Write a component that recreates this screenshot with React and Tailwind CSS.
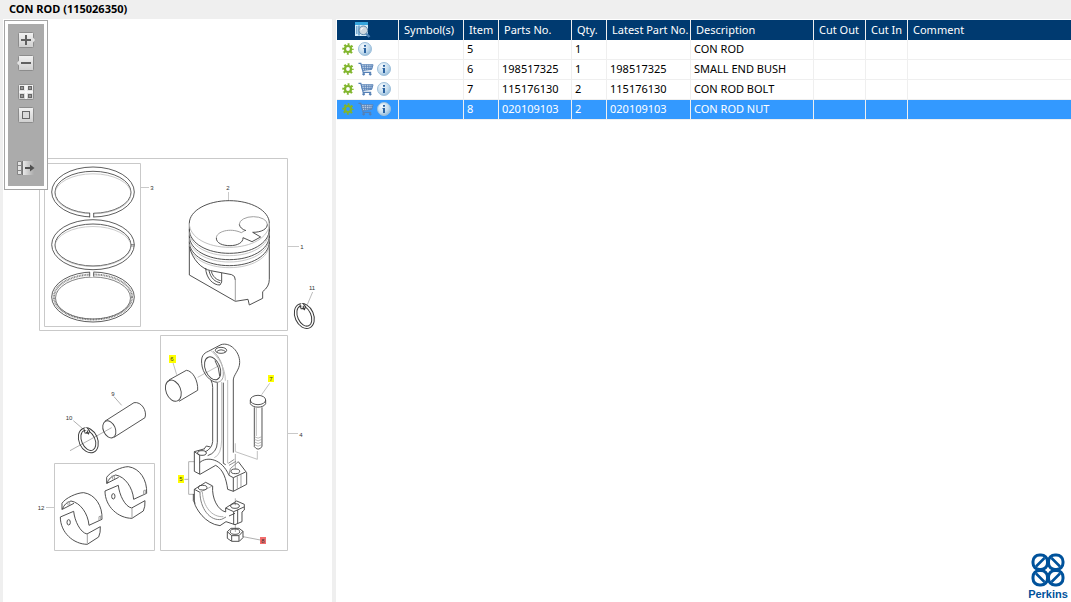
import { useState } from 'react'

const parts = [
  { item: '5', partNo: '', qty: '1', description: 'CON ROD' },
  { item: '6', partNo: '198517325', qty: '1', description: 'SMALL END BUSH' },
  { item: '7', partNo: '115176130', qty: '2', description: 'CON ROD BOLT' },
  { item: '8', partNo: '020109103', qty: '2', description: 'CON ROD NUT' },
]

const headers = ['Symbol(s)', 'Item', 'Parts No.', 'Qty.', 'Latest Part No.', 'Description', 'Cut Out', 'Cut In', 'Comment']

function ToolButton({ label, className, children }) {
  return (
    <button type="button" aria-label={label} className={`block h-4 w-[18px] ${className}`}>
      <svg viewBox="0 0 18 16" className="block h-4 w-[18px]">
        <defs>
          <linearGradient id="face" x1="0" y1="0" x2="0" y2="1">
            <stop offset="0" stopColor="#f2f2f2" />
            <stop offset="1" stopColor="#cfcfcf" />
          </linearGradient>
          <linearGradient id="fade" x1="0" y1="0" x2="1" y2="0">
            <stop offset="0" stopColor="#eeeeee" />
            <stop offset="1" stopColor="#ababab" />
          </linearGradient>
        </defs>
        {children}
      </svg>
    </button>
  )
}

function Face() {
  return <rect x="1.5" y="0.5" width="15" height="15" rx="1" fill="url(#face)" stroke="#8c8c8c" />
}

function Toolbar() {
  return (
    <div className="absolute left-px top-px border border-[#a5a5a5] bg-white p-[3px]">
      <div className="flex w-9 flex-col items-center bg-[#ababab] pb-[10px] pt-2">
        <ToolButton label="Zoom in" className="">
          <Face />
          <path d="M16 5.5l2 2.5-2 2.5z" fill="#e6e6e6" />
          <path d="M9 3v10M4 8h10" stroke="#606060" strokeWidth="2" />
        </ToolButton>
        <ToolButton label="Zoom out" className="mt-[7px]">
          <Face />
          <path d="M2 5.5L0 8l2 2.5z" fill="#e6e6e6" />
          <path d="M4 8h10" stroke="#606060" strokeWidth="2" />
        </ToolButton>
        <ToolButton label="Fit to window" className="mt-[13px]">
          <Face />
          <path d="M9 1v14M2 8h14" stroke="#f6f6f6" strokeWidth="2" />
          <g fill="#969696" stroke="#666">
            <rect x="3.5" y="2.5" width="3" height="3" />
            <rect x="11.5" y="2.5" width="3" height="3" />
            <rect x="3.5" y="10.5" width="3" height="3" />
            <rect x="11.5" y="10.5" width="3" height="3" />
          </g>
        </ToolButton>
        <ToolButton label="Actual size" className="mt-[7px]">
          <Face />
          <rect x="5.5" y="4.5" width="7" height="7" fill="#d9d9d9" stroke="#666" />
        </ToolButton>
        <ToolButton label="Hide list" className="mt-[37px]">
          <rect x="5" y="1" width="12" height="14" fill="url(#fade)" />
          <path d="M0.5 1.5h4v13h-4zM0.5 5.5h4M0.5 10.5h4" fill="#e3e3e3" stroke="#858585" />
          <path d="M5.5 1v14" stroke="#777" />
          <path d="M8 8h6" stroke="#505050" strokeWidth="2" />
          <path d="M13 4.5L17.5 8 13 11.5z" fill="#505050" />
        </ToolButton>
      </div>
    </div>
  )
}

function Shell({ transform }) {
  return (
    <g transform={transform} stroke="#444">
      <path d="M230 311V292C240 276 275 260 295 260C330 265 352 300 350 340L311 358C308 322 285 290 257 285Q238 290 231 310L266 292" />
      <path d="M225 333L265 316C268 345 285 380 305 384L345 362Q346 380 340 393L306 415C265 415 225 380 225 333z" />
      <path d="M306 384V413M246 287l3 12M252 285l2 12M341 344v-12l5-2v10" stroke="#999" />
      <ellipse cx="250" cy="349" rx="5" ry="8" />
    </g>
  )
}

function Circlip({ cx, cy }) {
  return (
    <g transform={`translate(${cx} ${cy}) rotate(-24)`} stroke="#3a3a3a">
      <ellipse rx="28" ry="39" />
      <ellipse rx="20" ry="32" />
      <path d="M6-38L10-22" stroke="#fff" strokeWidth="6" />
      <path d="M2-38l-2 14 8 4 1-9M12-35l3 11-7 7-4-8" />
    </g>
  )
}

function Diagram() {
  return (
    <svg viewBox="3 19 329 583" className="block h-[583px] w-[329px]" fill="none" aria-label="Con rod exploded view">
      <g stroke="#c9c9c9">
        <path d="M39.5 158.5H287.5V330.5H39.5z" />
        <path d="M44.5 163.5H140.5V326.5H44.5z" />
        <path d="M160.5 335.5H287.5V550.5H160.5z" />
        <path d="M54.5 463.5H154.5V550.5H54.5z" />
        <path d="M141 187.5h8M288 246.5h11M288 433.5h10M228.5 192v9M46 507.5h8" />
      </g>

      {/* piston rings */}
      <g stroke="#4c4c4c" strokeWidth="0.9">
        <ellipse cx="93" cy="192" rx="41.3" ry="25" />
        <ellipse cx="93" cy="192.3" rx="38" ry="21" />
        <ellipse cx="93" cy="193.8" rx="38" ry="20" stroke="#aaa" strokeWidth="0.6" />
        <path d="M90 212h3.5v6H90z" fill="#fff" stroke="none" />
        <path d="M89.7 213v4.3M93.7 213v4.3" />
        <ellipse cx="93" cy="244.7" rx="41.3" ry="25" />
        <ellipse cx="93" cy="245" rx="38" ry="21" />
        <ellipse cx="93" cy="246.5" rx="38" ry="20" stroke="#aaa" strokeWidth="0.6" />
        <path d="M131 244.5h3.5M131 246h3.5" strokeWidth="0.6" />
        <ellipse cx="93" cy="297" rx="41.3" ry="25" />
        <ellipse cx="93" cy="297" rx="39" ry="22.5" stroke="#888" strokeWidth="2" strokeDasharray="1 0.6" />
        <ellipse cx="93" cy="298" rx="37.5" ry="21" strokeWidth="0.7" />
        <path d="M90 271h3.5v6H90z" fill="#fff" stroke="none" />
        <path d="M89.7 272.2v4.3M93.7 272.2v4.3" />
      </g>

      {/* piston */}
      <g transform="translate(170 170) scale(0.3333)" stroke="#444" strokeWidth="2.8">
        <path d="M58 160C58 122 112 92 178 92S298 122 298 160V328Q298 350 278 365V385L238 405L234 388L196 394L58 315V160" />
        <path d="M58 160C58 202 112 232 178 232S298 202 298 160" stroke="#bbb" />
        <path d="M58 178C58 220 112 250 178 250S298 220 298 178M58 197C58 239 112 269 178 269S298 239 298 197M58 215C58 257 112 287 178 287S298 257 298 215" />
        <path d="M58 185C58 227 112 257 178 257S298 227 298 185M58 204C58 246 112 276 178 276S298 246 298 204M58 222C58 264 112 293 178 293S298 264 298 222" stroke="#aaa" strokeWidth="2" />
        <path d="M58 230C68 270 95 297 122 302L185 314Q196 317 196 330" />
        <path d="M196 328V394" stroke="#999" />
        <path d="M107 294C108 325 130 346 150 345L155 336V309M117 302C122 325 136 336 150 338M124 304C128 320 140 330 152 332" />
        <path d="M208 163A42 23 0 0 1 292 163M139 204C139 185 180 172 214 188L226 181" stroke="#999" />
        <path d="M139 204C139 220 158 227 180 227S220 218 219 203L246 215L272 201L248 187C275 187 292 177 292 163M208 163Q210 176 228 182" />
      </g>
      <g transform="translate(170 170) scale(0.3333)" strokeWidth="3">
        <path d="M428 366L412 404" stroke="#bbb" />
        <Circlip cx={403} cy={438} />
      </g>

      {/* bush, rod shank and bolt */}
      <g transform="translate(155 330) scale(0.3333)" stroke="#484848" strokeWidth="2.8">
        <path d="M54 98L65 134M128 142L192 107M344 160L320 194M241 340V365L307 388V363" stroke="#bbb" />
        <ellipse cx="55" cy="182" rx="22" ry="33" transform="rotate(-22 55 182)" />
        <path d="M42 150L94 121C113 122 130 152 128 181L72 214" />
        <path d="M168 151Q173 160 173 172V335Q171 356 150 366M235 368V150C235 135 254 120 254 98C255 65 225 35 198 44L160 64C145 70 138 80 140 100C142 130 165 157 188 157" />
        <path d="M188 157Q204 154 205 135C206 105 192 78 174 64" stroke="#999" />
        <ellipse cx="173" cy="115" rx="22" ry="36" transform="rotate(-22 173 115)" />
        <path d="M180 92Q193 112 194 138" />
        <ellipse cx="198" cy="61" rx="17" ry="9" />
        <path d="M185 65Q198 54 212 65M187 158V337Q186 368 158 377M205 158V400" />
        <path d="M218 150V400M200 156V330Q199 375 178 383M168 62C190 80 212 115 211 152" stroke="#bbb" />
        <ellipse cx="309" cy="210" rx="23" ry="14" />
        <path d="M286 210V221C292 235 326 235 332 221V210M298 232V350Q309 365 321 350V232" />
        <path d="M298 320Q309 329 321 320M298 328Q309 337 321 328M298 336Q309 345 321 336M298 344Q309 353 321 344M304 234V318" stroke="#999" strokeWidth="2" />
      </g>

      {/* big end, cap and nut */}
      <g transform="translate(155 430) scale(0.3333)" stroke="#444" strokeWidth="2.8">
        <path d="M118 95H101V193H118M101 148H88M241 72V118M241 205V226M241 282V306M264 320L316 330" stroke="#aaa" />
        <path d="M150 56L118 65V124L135 133L182 106C205 118 214 148 218 178L235 184L275 163V128L250 95M118 65L134 76V132M134 98C155 78 200 85 222 136L235 143V184M235 143L272 126" />
        <path d="M258 133V172M247 139V178" stroke="#999" />
        <ellipse cx="141" cy="69" rx="13" ry="7" />
        <path d="M148 56L154 48L166 51M205 100L212 104" />
        <path d="M222 136L226 116L250 95M220 100L238 88M222 106L243 94" stroke="#888" />
        <ellipse cx="241" cy="124" rx="13" ry="7" />
        <path d="M118 178L152 157L173 168C170 205 188 240 212 246V234L245 213L268 223V240L261 246V275L240 284L213 275L195 287C150 282 122 235 118 218V178M118 178L135 187M212 234L236 245V283M236 245L267 231M248 240V280M115 192V212L121 220M222 258L240 250" />
        <path d="M135 187C135 235 165 275 200 268L213 261" stroke="#777" />
        <path d="M135 187L172 168M142 186C145 230 170 262 205 260" stroke="#aaa" />
        <ellipse cx="143" cy="173" rx="13" ry="7" />
        <ellipse cx="240" cy="228" rx="13" ry="7" />
        <path d="M217 305L228 295H252L264 304V323L253 334H230L217 325zM217 305L230 317H252L264 304M230 317V333M252 317V333" />
        <ellipse cx="240" cy="305" rx="14" ry="8" />
      </g>

      {/* gudgeon pin, circlip and bearing shells */}
      <g transform="translate(30 380) scale(0.3333)" stroke="#484848" strokeWidth="2.8">
        <path d="M252 50L275 76M130 122L158 146M120 212L245 143" stroke="#aaa" />
        <ellipse cx="238" cy="148" rx="18" ry="27" transform="rotate(-24 238 148)" />
        <path d="M224 124L312 68C334 64 352 92 345 113L252 172" />
        <Circlip cx={175} cy={181} />
        <Shell />
        <Shell transform="translate(-134 78)" />
      </g>

      <g fill="#ffff00">
        <path d="M169 355h7v8h-7zM268 375h6v7h-6zM178 475h6v8h-6z" />
        <path d="M260 537h6v7h-6z" fill="#f26d6d" />
      </g>
      <g fill="#333" fontFamily="Liberation Sans, Arial, sans-serif" fontSize="6" textAnchor="middle">
        <text x="302" y="249">1</text>
        <text x="228" y="190">2</text>
        <text x="152" y="190">3</text>
        <text x="301" y="437">4</text>
        <text x="181" y="481">5</text>
        <text x="172" y="361">6</text>
        <text x="271" y="381">7</text>
        <text x="263" y="543">8</text>
        <text x="113" y="396">9</text>
        <text x="69" y="420">10</text>
        <text x="312" y="290">11</text>
        <text x="41" y="510">12</text>
      </g>
    </svg>
  )
}

function GearIcon() {
  return (
    <svg viewBox="0 0 12 12" className="block size-3" fill="none" stroke="#80b52c">
      <circle cx="6" cy="6" r="4.7" strokeWidth="2" strokeDasharray="1.9 1.791" strokeDashoffset="0.95" />
      <circle cx="6" cy="6" r="3" strokeWidth="2.2" />
    </svg>
  )
}

function CartIcon() {
  return (
    <svg viewBox="0 0 17 14" className="block h-[14px] w-4" fill="none" stroke="#5580b5">
      <path d="M0.5 1H3l2.5 9.500H14" strokeWidth="1.3" />
      <path d="M3.5 2.5H16L14.5 7.5L5 8.5z" fill="#c9d9ec" />
      <path d="M4 4.5h11.5M4.5 6.5H15M6.5 2.5l.5 6M9 2.5V8M11.5 2.5V8M14 2.5l-.5 5" strokeWidth="0.8" />
      <circle cx="6" cy="12.5" r="1" fill="#5580b5" />
      <circle cx="13" cy="12.5" r="1" fill="#5580b5" />
    </svg>
  )
}

function InfoIcon() {
  return (
    <svg viewBox="0 0 14 14" className="block size-[14px]">
      <defs>
        <radialGradient id="glass" cx="0.35" cy="0.3" r="0.8">
          <stop offset="0" stopColor="#f4f9fd" />
          <stop offset="0.6" stopColor="#c3dbed" />
          <stop offset="1" stopColor="#8db6d6" />
        </radialGradient>
      </defs>
      <circle cx="7" cy="7" r="6.5" fill="url(#glass)" stroke="#9fc0db" />
      <path d="M6 3h2v1.8H6zM5.500 6H8v5H6V7h-.5z" fill="#2a62a0" />
    </svg>
  )
}

function PreviewIcon() {
  return (
    <svg viewBox="0 0 16 16" className="block size-4">
      <path d="M0 1h13v13H0z" fill="#d5ebf8" />
      <path d="M0 0h13v3H0z" fill="#35a5dd" />
      <path d="M1 5h1.500M1 7h1.500M1 9h1.500M1 11h1.500" stroke="#1c6eae" />
      <path d="M4 3.5v10" stroke="#1c6eae" />
      <path d="M11 11.5l3.5 3.5" stroke="#4d81b3" strokeWidth="2.4" />
      <circle cx="8.300" cy="8.300" r="4.300" fill="#cfd8df" stroke="#5f87a8" />
      <path d="M6 8.300Q6 6 8.300 6" stroke="#fff" fill="none" />
    </svg>
  )
}

function Logo() {
  return (
    <div className="mr-[3px] mt-auto flex w-10 flex-col items-center self-end text-[#00529b]">
      <svg viewBox="0 0 34 34" className="block h-[34px] w-[34px]" fill="none" stroke="currentColor" strokeWidth="3">
        <rect x="2" y="2" width="14.500" height="14.500" rx="6.500" />
        <rect x="17.500" y="2" width="14.500" height="14.500" rx="6.500" />
        <rect x="2" y="17.500" width="14.500" height="14.500" rx="6.500" />
        <rect x="17.500" y="17.500" width="14.500" height="14.500" rx="6.500" />
        <path d="M5 13.500L13.500 5M20.500 5L29 13.500M5 20.500L13.500 29M20.500 29L29 20.500" strokeWidth="2.500" />
      </svg>
      <span className="font-[Liberation_Sans,Arial,sans-serif] text-[11px] font-bold leading-[15px]">Perkins</span>
    </div>
  )
}

export default function App() {
  const [selected, setSelected] = useState('8')

  return (
    <div className="flex h-screen flex-col bg-[#efefef] font-[Noto_Sans,Tahoma,sans-serif] text-[11px] text-black">
      <h1 className="h-[19px] shrink-0 pl-[9px] font-bold leading-[18px]">CON ROD (115026350)</h1>
      <div className="flex min-h-0 flex-1 gap-1 pl-[3px]">
        <section className="relative shrink-0 overflow-hidden bg-white">
          <Diagram />
          <Toolbar />
        </section>

        <section className="flex min-w-0 flex-1 flex-col bg-white pl-px pt-px">
          <table className="w-full table-fixed border-separate border-spacing-0">
            <colgroup>
              <col className="w-[62px]" />
              <col className="w-[65px]" />
              <col className="w-[35px]" />
              <col className="w-[73px]" />
              <col className="w-[35px]" />
              <col className="w-[84px]" />
              <col className="w-[123px]" />
              <col className="w-[52px]" />
              <col className="w-[42px]" />
              <col />
            </colgroup>
            <thead>
              <tr className="h-5 bg-[#003a70] text-left text-white">
                <th className="border-r border-[#efefef] p-0 pl-[18px]">
                  <button type="button" aria-label="Preview" className="block"><PreviewIcon /></button>
                </th>
                {headers.map(h => (
                  <th key={h} className="whitespace-nowrap border-r border-[#efefef] p-0 pl-[5px] font-normal leading-5 last:border-r-0">{h}</th>
                ))}
              </tr>
            </thead>
            <tbody className="[&_td]:h-5 [&_td]:whitespace-nowrap [&_td]:border-b [&_td]:border-r [&_td]:border-[#efefef] [&_td]:p-0 [&_td]:pb-px [&_td]:pl-[3px] [&_td]:leading-[18px] [&_td:last-child]:border-r-0">
              {parts.map(p => (
                <tr key={p.item} onClick={() => setSelected(p.item)} className={p.item === selected ? 'bg-[#3399ff] text-white' : 'bg-white'}>
                  <td>
                    <div className="flex items-center gap-[3px] pl-0.5">
                      <button type="button" aria-label="Options" className="w-[13px]"><GearIcon /></button>
                      {p.partNo && <button type="button" aria-label="Add to cart"><CartIcon /></button>}
                      <button type="button" aria-label="Information"><InfoIcon /></button>
                    </div>
                  </td>
                  <td></td>
                  <td>{p.item}</td>
                  <td>{p.partNo}</td>
                  <td>{p.qty}</td>
                  <td>{p.partNo}</td>
                  <td>{p.description}</td>
                  <td></td>
                  <td></td>
                  <td></td>
                </tr>
              ))}
            </tbody>
          </table>
          <Logo />
        </section>
      </div>
    </div>
  )
}
